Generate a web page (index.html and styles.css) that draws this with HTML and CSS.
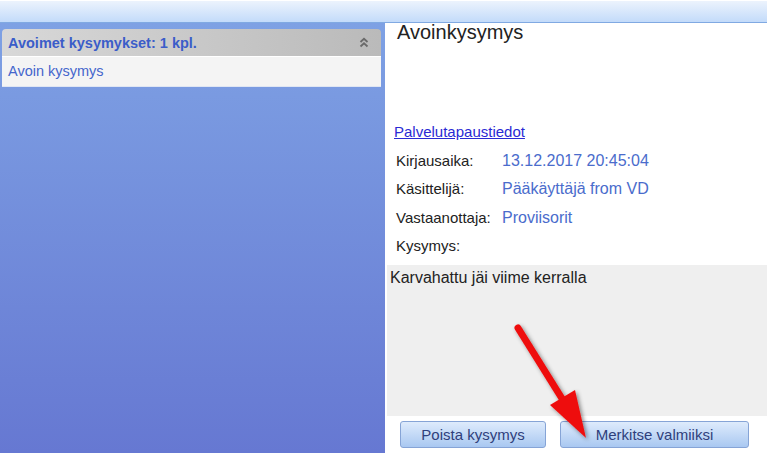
FILE: index.html
```html
<!DOCTYPE html>
<html lang="fi">
<head>
<meta charset="utf-8">
<title>Avoinkysymys</title>
<link rel="stylesheet" href="styles.css">
</head>
<body>
<div class="app">
  <div class="topbar"></div>
  <div class="main">
    <aside class="left">
      <div class="group-head">
        <span class="group-title">Avoimet kysymykset: 1 kpl.</span>
        <svg class="chev" width="10" height="11" viewBox="0 0 10 11">
          <path d="M1.5 5 L5 1.8 L8.5 5" fill="none" stroke="#6a6a6a" stroke-width="1.8"/>
          <path d="M1.5 9.5 L5 6.3 L8.5 9.5" fill="none" stroke="#6a6a6a" stroke-width="1.8"/>
        </svg>
      </div>
      <div class="group-item">Avoin kysymys</div>
    </aside>
    <section class="right">
      <h1 class="title">Avoinkysymys</h1>
      <a class="link" href="#">Palvelutapaustiedot</a>
      <div class="details">
        <div class="row"><span class="lbl">Kirjausaika:</span><span class="val">13.12.2017 20:45:04</span></div>
        <div class="row"><span class="lbl">Käsittelijä:</span><span class="val">Pääkäyttäjä from VD</span></div>
        <div class="row"><span class="lbl">Vastaanottaja:</span><span class="val">Proviisorit</span></div>
        <div class="row"><span class="lbl">Kysymys:</span><span class="val"></span></div>
      </div>
      <div class="question">Karvahattu jäi viime kerralla</div>
      <div class="buttons">
        <button class="btn btn-delete">Poista kysymys</button>
        <button class="btn btn-done">Merkitse valmiiksi</button>
      </div>
    </section>
  </div>
  <svg class="arrow" width="768" height="454" viewBox="0 0 768 454">
    <defs>
      <filter id="sh" x="-20%" y="-20%" width="140%" height="140%">
        <feDropShadow dx="2" dy="2" stdDeviation="2" flood-color="#000" flood-opacity="0.45"/>
      </filter>
    </defs>
    <g filter="url(#sh)">
      <line x1="518" y1="328" x2="566" y2="405" stroke="#ee1111" stroke-width="7" stroke-linecap="round"/>
      <polygon points="550,405 575,390 586,438" fill="#ee1111"/>
    </g>
  </svg>
</div>
</body>
</html>
```

FILE: styles.css
```css
* { box-sizing: border-box; }
html, body { margin: 0; padding: 0; background: #fff; }
body { font-family: "Liberation Sans", Arial, sans-serif; }

.app {
  position: relative;
  width: 768px;
  height: 454px;
  padding: 1px 1px 1px 0;
  display: flex;
  flex-direction: column;
  overflow: hidden;
  background: #fff;
}

.topbar {
  height: 22px;
  flex: none;
  background: linear-gradient(to bottom, #ecf3fd, #c3dbfa);
  border-bottom: 1px solid #80a9e2;
}

.main {
  flex: 1;
  display: flex;
  min-height: 0;
}

.left {
  width: 385px;
  flex: none;
  background: linear-gradient(to bottom, #7ea1e4, #6678d2);
  padding: 6px 4px 0 2px;
}

.group-head {
  height: 27px;
  border-radius: 4px 4px 0 0;
  background: linear-gradient(to right, #d8d8d8, #bababa);
  display: flex;
  align-items: center;
  justify-content: space-between;
  padding: 0 12px 0 6px;
}

.group-title {
  font-size: 14.5px;
  font-weight: bold;
  color: #3b5dc9;
}

.chev { display: block; }

.group-item {
  height: 31px;
  background: #f4f4f4;
  border-top: 1px solid #fff;
  border-bottom: 1px solid #e0e6f3;
  font-size: 14.5px;
  color: #4466cc;
  padding: 6px 0 0 6px;
}

.right {
  flex: 1;
  display: flex;
  flex-direction: column;
  min-width: 0;
  background: #fff;
}

.title {
  margin: 0;
  padding-left: 12px;
  font-size: 20px;
  font-weight: normal;
  line-height: 18px;
  color: #222;
}

.link {
  margin: 82px 0 0 9px;
  font-size: 15px;
  line-height: 18px;
  color: #2a2ad4;
  text-decoration: underline;
  align-self: flex-start;
}

.details {
  margin-top: 6px;
  padding-left: 11px;
}

.row {
  display: grid;
  grid-template-columns: 106px 1fr;
  align-items: baseline;
  line-height: 28px;
  height: 28.3px;
}

.lbl { font-size: 15px; color: #222; }
.val { font-size: 16px; color: #4a6ccc; }

.question {
  margin: 5px 0 0 2px;
  height: 151px;
  background: #efefef;
  padding: 3px 0 0 3px;
  font-size: 16px;
  line-height: 20px;
  color: #222;
}

.buttons {
  margin: 5px 0 0 15px;
  display: flex;
  gap: 14px;
}

.btn {
  height: 27px;
  border: 1px solid #86a4d6;
  border-radius: 3px;
  background: linear-gradient(to bottom, #deebfc, #a9c8f1);
  font-family: "Liberation Sans", Arial, sans-serif;
  font-size: 15px;
  color: #2f3f7c;
  padding: 0;
}

.btn-delete { width: 146px; }
.btn-done { width: 189px; }

.arrow {
  position: absolute;
  left: 0;
  top: 0;
  pointer-events: none;
}
```
